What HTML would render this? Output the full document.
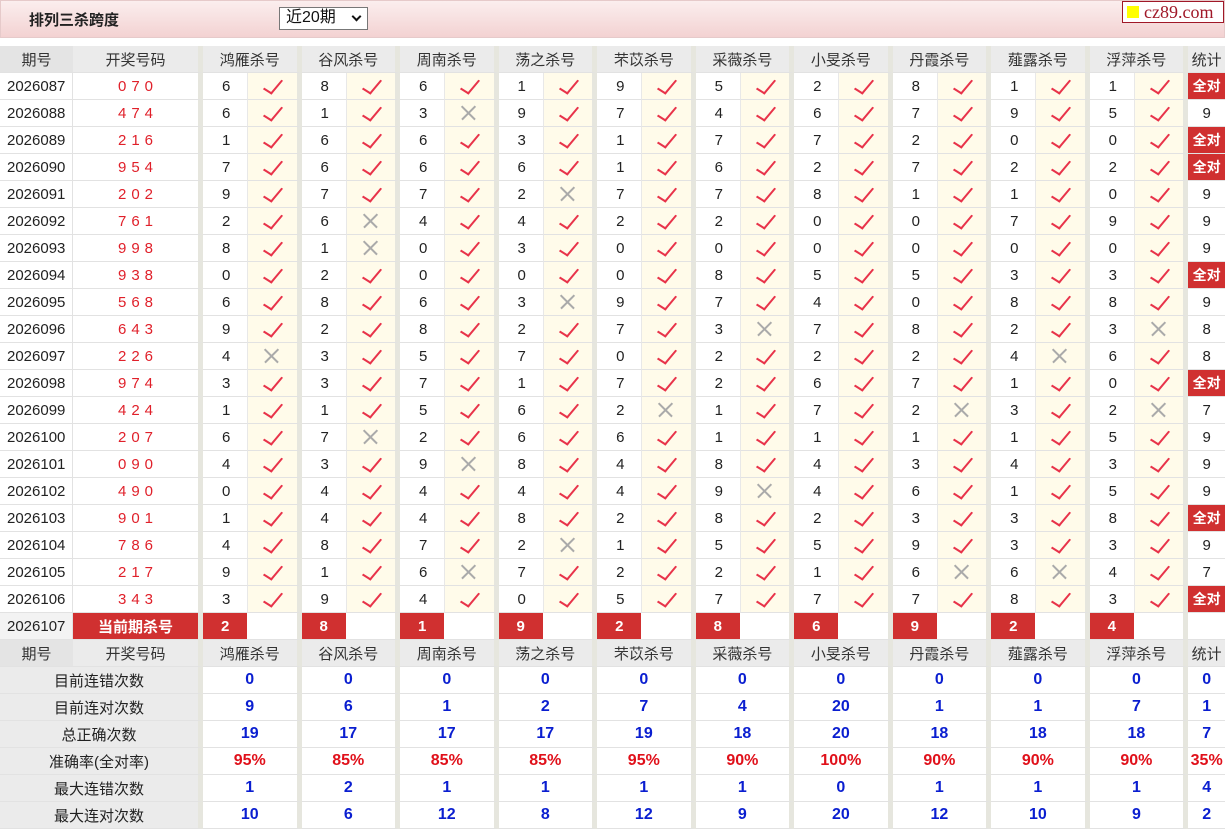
<!DOCTYPE html>
<html><head><meta charset="utf-8"><style>
*{box-sizing:border-box}
body{margin:0;width:1225px;height:827px;overflow:hidden;background:#fff;font-family:"Liberation Sans","Noto Sans CJK SC",sans-serif;color:#222}
.top{position:absolute;left:0;top:0;width:1225px;height:38px;background:linear-gradient(#fbeeee,#f3d2d2);border:1px solid #e6caca}
.title{position:absolute;left:28px;top:8px;font-size:15px;font-weight:bold;color:#222}
.sel{position:absolute;left:278px;top:6px;width:89px;height:23px;border:1px solid #777;background:#fff;font-size:16px;line-height:20px;padding:0 0 0 6px;color:#111}
.sel b{position:absolute;right:7px;top:5px;width:7px;height:7px;border-right:2px solid #111;border-bottom:2px solid #111;transform:rotate(45deg)}
.logo{position:absolute;left:1121px;top:0;width:102px;height:22px;border:1px solid #a01828;background:#fff;font-family:"Liberation Serif",serif;font-size:18px;color:#a01828;line-height:20px;padding-left:21px}
.logo i{position:absolute;left:4px;top:4px;width:12px;height:12px;background:#ff0}
table{position:absolute;left:0;top:46px;width:1225px;border-collapse:separate;border-spacing:0;table-layout:fixed}
td{height:27px;padding:0;border-bottom:1px solid #e2e2e2;font-size:15px;white-space:nowrap;overflow:hidden}
td.p{padding-left:7px;background:#fff;border-right:1px solid #e2e2e2}
td.h{background:#ebebeb;text-align:center;color:#333}
td.c{text-align:center;color:#e0202a;letter-spacing:5px;padding-left:5px;border-right:5px solid #e6e6de}
td.n{padding-left:19px}
td.k,td.x{background:#fffbea;position:relative;border-left:1px solid #e8e8e8;border-right:5px solid #e6e6de}
td.k:after{content:"";position:absolute;left:20px;top:3px;width:8px;height:16px;border-right:2px solid #e8334a;border-bottom:2px solid #e8334a;transform:rotate(40deg) skewY(-8deg)}
td.x:before,td.x:after{content:"";position:absolute;left:14px;top:12px;width:19px;height:1.5px;background:#aaa;transform:rotate(45deg)}
td.x:after{transform:rotate(-45deg)}
td.s{text-align:center}
td.a{background:#d03030;color:#fff;font-weight:bold;text-align:center;font-size:14px}
td.hd{border-right:5px solid #e6e6de}
td.r{background:#d03030;color:#fff;font-weight:bold;padding-left:18px}
td.e{border-right:5px solid #e6e6de;background:#fff}
td.l{background:#ebebeb;text-align:center;border-right:5px solid #e6e6de;color:#222}
td.v{text-align:center;color:#0a1ed0;font-weight:bold;font-size:16px;border-right:5px solid #e6e6de}
td.v2{text-align:center;color:#0a1ed0;font-weight:bold;font-size:16px}
tr.pc td.v,tr.pc td.v2{color:#e0101a}
</style></head><body>
<div class="top"><div class="title">排列三杀跨度</div><div class="sel">近20期<b></b></div><div class="logo"><i></i>cz89.com</div></div>
<table>
<colgroup><col style="width:73px"><col style="width:130px">
<col style="width:44px"><col style="width:54.5px"><col style="width:44px"><col style="width:54.5px"><col style="width:44px"><col style="width:54.5px"><col style="width:44px"><col style="width:54.5px"><col style="width:44px"><col style="width:54.5px"><col style="width:44px"><col style="width:54.5px"><col style="width:44px"><col style="width:54.5px"><col style="width:44px"><col style="width:54.5px"><col style="width:44px"><col style="width:54.5px"><col style="width:44px"><col style="width:54.5px"><col style="width:37px"></colgroup>
<tr><td class="h" style="background:#e4e4e4">期号</td><td class="h hd">开奖号码</td><td class="h hd" colspan="2">鸿雁杀号</td><td class="h hd" colspan="2">谷风杀号</td><td class="h hd" colspan="2">周南杀号</td><td class="h hd" colspan="2">荡之杀号</td><td class="h hd" colspan="2">芣苡杀号</td><td class="h hd" colspan="2">采薇杀号</td><td class="h hd" colspan="2">小旻杀号</td><td class="h hd" colspan="2">丹霞杀号</td><td class="h hd" colspan="2">薤露杀号</td><td class="h hd" colspan="2">浮萍杀号</td><td class="h">统计</td></tr>
<tr><td class="p">2026087</td><td class="c">070</td><td class="n">6</td><td class="k"></td><td class="n">8</td><td class="k"></td><td class="n">6</td><td class="k"></td><td class="n">1</td><td class="k"></td><td class="n">9</td><td class="k"></td><td class="n">5</td><td class="k"></td><td class="n">2</td><td class="k"></td><td class="n">8</td><td class="k"></td><td class="n">1</td><td class="k"></td><td class="n">1</td><td class="k"></td><td class="a">全对</td></tr>
<tr><td class="p">2026088</td><td class="c">474</td><td class="n">6</td><td class="k"></td><td class="n">1</td><td class="k"></td><td class="n">3</td><td class="x"></td><td class="n">9</td><td class="k"></td><td class="n">7</td><td class="k"></td><td class="n">4</td><td class="k"></td><td class="n">6</td><td class="k"></td><td class="n">7</td><td class="k"></td><td class="n">9</td><td class="k"></td><td class="n">5</td><td class="k"></td><td class="s">9</td></tr>
<tr><td class="p">2026089</td><td class="c">216</td><td class="n">1</td><td class="k"></td><td class="n">6</td><td class="k"></td><td class="n">6</td><td class="k"></td><td class="n">3</td><td class="k"></td><td class="n">1</td><td class="k"></td><td class="n">7</td><td class="k"></td><td class="n">7</td><td class="k"></td><td class="n">2</td><td class="k"></td><td class="n">0</td><td class="k"></td><td class="n">0</td><td class="k"></td><td class="a">全对</td></tr>
<tr><td class="p">2026090</td><td class="c">954</td><td class="n">7</td><td class="k"></td><td class="n">6</td><td class="k"></td><td class="n">6</td><td class="k"></td><td class="n">6</td><td class="k"></td><td class="n">1</td><td class="k"></td><td class="n">6</td><td class="k"></td><td class="n">2</td><td class="k"></td><td class="n">7</td><td class="k"></td><td class="n">2</td><td class="k"></td><td class="n">2</td><td class="k"></td><td class="a">全对</td></tr>
<tr><td class="p">2026091</td><td class="c">202</td><td class="n">9</td><td class="k"></td><td class="n">7</td><td class="k"></td><td class="n">7</td><td class="k"></td><td class="n">2</td><td class="x"></td><td class="n">7</td><td class="k"></td><td class="n">7</td><td class="k"></td><td class="n">8</td><td class="k"></td><td class="n">1</td><td class="k"></td><td class="n">1</td><td class="k"></td><td class="n">0</td><td class="k"></td><td class="s">9</td></tr>
<tr><td class="p">2026092</td><td class="c">761</td><td class="n">2</td><td class="k"></td><td class="n">6</td><td class="x"></td><td class="n">4</td><td class="k"></td><td class="n">4</td><td class="k"></td><td class="n">2</td><td class="k"></td><td class="n">2</td><td class="k"></td><td class="n">0</td><td class="k"></td><td class="n">0</td><td class="k"></td><td class="n">7</td><td class="k"></td><td class="n">9</td><td class="k"></td><td class="s">9</td></tr>
<tr><td class="p">2026093</td><td class="c">998</td><td class="n">8</td><td class="k"></td><td class="n">1</td><td class="x"></td><td class="n">0</td><td class="k"></td><td class="n">3</td><td class="k"></td><td class="n">0</td><td class="k"></td><td class="n">0</td><td class="k"></td><td class="n">0</td><td class="k"></td><td class="n">0</td><td class="k"></td><td class="n">0</td><td class="k"></td><td class="n">0</td><td class="k"></td><td class="s">9</td></tr>
<tr><td class="p">2026094</td><td class="c">938</td><td class="n">0</td><td class="k"></td><td class="n">2</td><td class="k"></td><td class="n">0</td><td class="k"></td><td class="n">0</td><td class="k"></td><td class="n">0</td><td class="k"></td><td class="n">8</td><td class="k"></td><td class="n">5</td><td class="k"></td><td class="n">5</td><td class="k"></td><td class="n">3</td><td class="k"></td><td class="n">3</td><td class="k"></td><td class="a">全对</td></tr>
<tr><td class="p">2026095</td><td class="c">568</td><td class="n">6</td><td class="k"></td><td class="n">8</td><td class="k"></td><td class="n">6</td><td class="k"></td><td class="n">3</td><td class="x"></td><td class="n">9</td><td class="k"></td><td class="n">7</td><td class="k"></td><td class="n">4</td><td class="k"></td><td class="n">0</td><td class="k"></td><td class="n">8</td><td class="k"></td><td class="n">8</td><td class="k"></td><td class="s">9</td></tr>
<tr><td class="p">2026096</td><td class="c">643</td><td class="n">9</td><td class="k"></td><td class="n">2</td><td class="k"></td><td class="n">8</td><td class="k"></td><td class="n">2</td><td class="k"></td><td class="n">7</td><td class="k"></td><td class="n">3</td><td class="x"></td><td class="n">7</td><td class="k"></td><td class="n">8</td><td class="k"></td><td class="n">2</td><td class="k"></td><td class="n">3</td><td class="x"></td><td class="s">8</td></tr>
<tr><td class="p">2026097</td><td class="c">226</td><td class="n">4</td><td class="x"></td><td class="n">3</td><td class="k"></td><td class="n">5</td><td class="k"></td><td class="n">7</td><td class="k"></td><td class="n">0</td><td class="k"></td><td class="n">2</td><td class="k"></td><td class="n">2</td><td class="k"></td><td class="n">2</td><td class="k"></td><td class="n">4</td><td class="x"></td><td class="n">6</td><td class="k"></td><td class="s">8</td></tr>
<tr><td class="p">2026098</td><td class="c">974</td><td class="n">3</td><td class="k"></td><td class="n">3</td><td class="k"></td><td class="n">7</td><td class="k"></td><td class="n">1</td><td class="k"></td><td class="n">7</td><td class="k"></td><td class="n">2</td><td class="k"></td><td class="n">6</td><td class="k"></td><td class="n">7</td><td class="k"></td><td class="n">1</td><td class="k"></td><td class="n">0</td><td class="k"></td><td class="a">全对</td></tr>
<tr><td class="p">2026099</td><td class="c">424</td><td class="n">1</td><td class="k"></td><td class="n">1</td><td class="k"></td><td class="n">5</td><td class="k"></td><td class="n">6</td><td class="k"></td><td class="n">2</td><td class="x"></td><td class="n">1</td><td class="k"></td><td class="n">7</td><td class="k"></td><td class="n">2</td><td class="x"></td><td class="n">3</td><td class="k"></td><td class="n">2</td><td class="x"></td><td class="s">7</td></tr>
<tr><td class="p">2026100</td><td class="c">207</td><td class="n">6</td><td class="k"></td><td class="n">7</td><td class="x"></td><td class="n">2</td><td class="k"></td><td class="n">6</td><td class="k"></td><td class="n">6</td><td class="k"></td><td class="n">1</td><td class="k"></td><td class="n">1</td><td class="k"></td><td class="n">1</td><td class="k"></td><td class="n">1</td><td class="k"></td><td class="n">5</td><td class="k"></td><td class="s">9</td></tr>
<tr><td class="p">2026101</td><td class="c">090</td><td class="n">4</td><td class="k"></td><td class="n">3</td><td class="k"></td><td class="n">9</td><td class="x"></td><td class="n">8</td><td class="k"></td><td class="n">4</td><td class="k"></td><td class="n">8</td><td class="k"></td><td class="n">4</td><td class="k"></td><td class="n">3</td><td class="k"></td><td class="n">4</td><td class="k"></td><td class="n">3</td><td class="k"></td><td class="s">9</td></tr>
<tr><td class="p">2026102</td><td class="c">490</td><td class="n">0</td><td class="k"></td><td class="n">4</td><td class="k"></td><td class="n">4</td><td class="k"></td><td class="n">4</td><td class="k"></td><td class="n">4</td><td class="k"></td><td class="n">9</td><td class="x"></td><td class="n">4</td><td class="k"></td><td class="n">6</td><td class="k"></td><td class="n">1</td><td class="k"></td><td class="n">5</td><td class="k"></td><td class="s">9</td></tr>
<tr><td class="p">2026103</td><td class="c">901</td><td class="n">1</td><td class="k"></td><td class="n">4</td><td class="k"></td><td class="n">4</td><td class="k"></td><td class="n">8</td><td class="k"></td><td class="n">2</td><td class="k"></td><td class="n">8</td><td class="k"></td><td class="n">2</td><td class="k"></td><td class="n">3</td><td class="k"></td><td class="n">3</td><td class="k"></td><td class="n">8</td><td class="k"></td><td class="a">全对</td></tr>
<tr><td class="p">2026104</td><td class="c">786</td><td class="n">4</td><td class="k"></td><td class="n">8</td><td class="k"></td><td class="n">7</td><td class="k"></td><td class="n">2</td><td class="x"></td><td class="n">1</td><td class="k"></td><td class="n">5</td><td class="k"></td><td class="n">5</td><td class="k"></td><td class="n">9</td><td class="k"></td><td class="n">3</td><td class="k"></td><td class="n">3</td><td class="k"></td><td class="s">9</td></tr>
<tr><td class="p">2026105</td><td class="c">217</td><td class="n">9</td><td class="k"></td><td class="n">1</td><td class="k"></td><td class="n">6</td><td class="x"></td><td class="n">7</td><td class="k"></td><td class="n">2</td><td class="k"></td><td class="n">2</td><td class="k"></td><td class="n">1</td><td class="k"></td><td class="n">6</td><td class="x"></td><td class="n">6</td><td class="x"></td><td class="n">4</td><td class="k"></td><td class="s">7</td></tr>
<tr><td class="p">2026106</td><td class="c">343</td><td class="n">3</td><td class="k"></td><td class="n">9</td><td class="k"></td><td class="n">4</td><td class="k"></td><td class="n">0</td><td class="k"></td><td class="n">5</td><td class="k"></td><td class="n">7</td><td class="k"></td><td class="n">7</td><td class="k"></td><td class="n">7</td><td class="k"></td><td class="n">8</td><td class="k"></td><td class="n">3</td><td class="k"></td><td class="a">全对</td></tr>
<tr><td class="p" style="background:#f3f3f3">2026107</td><td class="a" style="border-right:5px solid #e6e6de;font-size:15px">当前期杀号</td><td class="r">2</td><td class="e"></td><td class="r">8</td><td class="e"></td><td class="r">1</td><td class="e"></td><td class="r">9</td><td class="e"></td><td class="r">2</td><td class="e"></td><td class="r">8</td><td class="e"></td><td class="r">6</td><td class="e"></td><td class="r">9</td><td class="e"></td><td class="r">2</td><td class="e"></td><td class="r">4</td><td class="e"></td><td></td></tr>
<tr><td class="h" style="background:#e4e4e4">期号</td><td class="h hd">开奖号码</td><td class="h hd" colspan="2">鸿雁杀号</td><td class="h hd" colspan="2">谷风杀号</td><td class="h hd" colspan="2">周南杀号</td><td class="h hd" colspan="2">荡之杀号</td><td class="h hd" colspan="2">芣苡杀号</td><td class="h hd" colspan="2">采薇杀号</td><td class="h hd" colspan="2">小旻杀号</td><td class="h hd" colspan="2">丹霞杀号</td><td class="h hd" colspan="2">薤露杀号</td><td class="h hd" colspan="2">浮萍杀号</td><td class="h">统计</td></tr>
<tr><td class="l" colspan="2">目前连错次数</td><td class="v" colspan="2">0</td><td class="v" colspan="2">0</td><td class="v" colspan="2">0</td><td class="v" colspan="2">0</td><td class="v" colspan="2">0</td><td class="v" colspan="2">0</td><td class="v" colspan="2">0</td><td class="v" colspan="2">0</td><td class="v" colspan="2">0</td><td class="v" colspan="2">0</td><td class="v2">0</td></tr>
<tr><td class="l" colspan="2">目前连对次数</td><td class="v" colspan="2">9</td><td class="v" colspan="2">6</td><td class="v" colspan="2">1</td><td class="v" colspan="2">2</td><td class="v" colspan="2">7</td><td class="v" colspan="2">4</td><td class="v" colspan="2">20</td><td class="v" colspan="2">1</td><td class="v" colspan="2">1</td><td class="v" colspan="2">7</td><td class="v2">1</td></tr>
<tr><td class="l" colspan="2">总正确次数</td><td class="v" colspan="2">19</td><td class="v" colspan="2">17</td><td class="v" colspan="2">17</td><td class="v" colspan="2">17</td><td class="v" colspan="2">19</td><td class="v" colspan="2">18</td><td class="v" colspan="2">20</td><td class="v" colspan="2">18</td><td class="v" colspan="2">18</td><td class="v" colspan="2">18</td><td class="v2">7</td></tr>
<tr class="pc"><td class="l" colspan="2">准确率(全对率)</td><td class="v" colspan="2">95%</td><td class="v" colspan="2">85%</td><td class="v" colspan="2">85%</td><td class="v" colspan="2">85%</td><td class="v" colspan="2">95%</td><td class="v" colspan="2">90%</td><td class="v" colspan="2">100%</td><td class="v" colspan="2">90%</td><td class="v" colspan="2">90%</td><td class="v" colspan="2">90%</td><td class="v2">35%</td></tr>
<tr><td class="l" colspan="2">最大连错次数</td><td class="v" colspan="2">1</td><td class="v" colspan="2">2</td><td class="v" colspan="2">1</td><td class="v" colspan="2">1</td><td class="v" colspan="2">1</td><td class="v" colspan="2">1</td><td class="v" colspan="2">0</td><td class="v" colspan="2">1</td><td class="v" colspan="2">1</td><td class="v" colspan="2">1</td><td class="v2">4</td></tr>
<tr><td class="l" colspan="2">最大连对次数</td><td class="v" colspan="2">10</td><td class="v" colspan="2">6</td><td class="v" colspan="2">12</td><td class="v" colspan="2">8</td><td class="v" colspan="2">12</td><td class="v" colspan="2">9</td><td class="v" colspan="2">20</td><td class="v" colspan="2">12</td><td class="v" colspan="2">10</td><td class="v" colspan="2">9</td><td class="v2">2</td></tr>
</table>
</body></html>
